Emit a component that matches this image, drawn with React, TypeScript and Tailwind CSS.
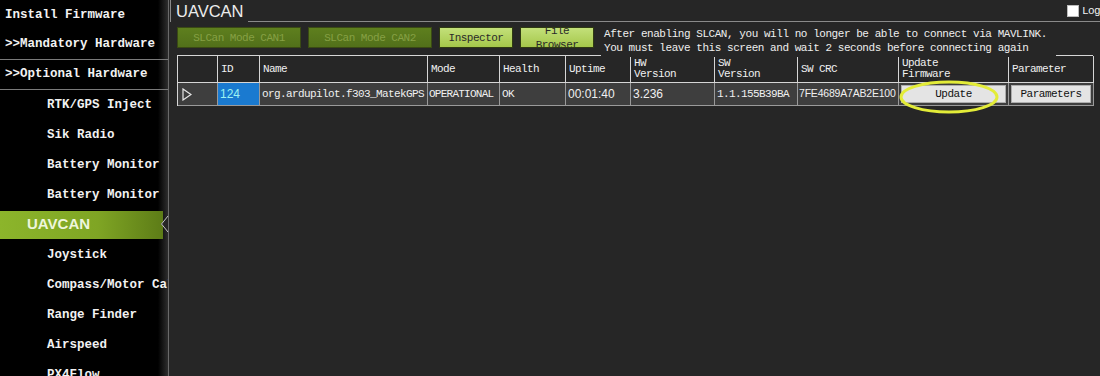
import type { ReactNode } from "react";

const mono = "font-['Liberation_Mono','DejaVu_Sans_Mono',monospace]";
const sans = "font-['Liberation_Sans',Arial,sans-serif]";

type NavItem = { label: string; indent?: boolean; divider?: boolean; active?: boolean };

const navItems: NavItem[] = [
  { label: "Install Firmware" },
  { label: ">>Mandatory Hardware", divider: true },
  { label: ">>Optional Hardware", divider: true },
  { label: "RTK/GPS Inject", indent: true },
  { label: "Sik Radio", indent: true },
  { label: "Battery Monitor", indent: true },
  { label: "Battery Monitor", indent: true },
  { label: "UAVCAN", active: true },
  { label: "Joystick", indent: true },
  { label: "Compass/Motor Calib", indent: true },
  { label: "Range Finder", indent: true },
  { label: "Airspeed", indent: true },
  { label: "PX4Flow", indent: true },
];

function SideNav(): JSX.Element {
  return (
    <nav className="h-[376px] w-[169px] shrink-0 overflow-hidden border-r border-[#6a6a6a] bg-[linear-gradient(to_right,#000_0,#000_158px,#2e2e2e_168px)]">
      {navItems.map((item, i) =>
        item.active ? (
          <div key={i} className="relative flex h-[30px] items-center pb-[1px]">
            <div className="flex h-[28px] w-[163px] items-center bg-[linear-gradient(to_right,#8cb52b,#7fa524_60%,#5d7c17)] pl-[27px]">
              <span className={`${sans} text-[15px] font-bold text-[#eef6dc]`}>{item.label}</span>
            </div>
            <svg className="absolute right-0 top-[6px]" width="7" height="16" viewBox="0 0 7 16">
              <polygon points="7,0 0,8 7,16" fill="#262626" />
              <polyline points="7,0 0.5,8 7,16" fill="none" stroke="#c8c8c8" strokeWidth="1" />
            </svg>
          </div>
        ) : (
          <div
            key={i}
            className={`flex h-[30px] items-center whitespace-nowrap ${item.indent ? "pl-[47px]" : "pl-[5px]"} ${
              item.divider ? "border-b border-[#7a7a7a]" : ""
            }`}
          >
            <span className={`${mono} text-[12.5px] font-bold text-[#f2f2f2]`}>{item.label}</span>
          </div>
        )
      )}
    </nav>
  );
}

function ModeButton({ children, bright }: { children: ReactNode; bright?: boolean }): JSX.Element {
  return (
    <div
      className={`flex h-[21px] items-center justify-center overflow-hidden border text-center leading-[14px] ${mono} text-[11px] tracking-[-0.5px] ${
        bright
          ? "border-[#2f3a12] bg-[linear-gradient(#c3e07a,#a5c74a)] text-[#2a2a2a]"
          : "border-[#3a4a14] bg-[linear-gradient(#5e7f1e,#52701a)] text-[#86a044]"
      }`}
    >
      <span>{children}</span>
    </div>
  );
}

const cols = "grid-cols-[40px_42px_168px_72px_66px_65px_84px_83px_101px_110px_85px]";

const headers: string[][] = [
  [""],
  ["ID"],
  ["Name"],
  ["Mode"],
  ["Health"],
  ["Uptime"],
  ["HW", "Version"],
  ["SW", "Version"],
  ["SW CRC"],
  ["Update", "Firmware"],
  ["Parameter"],
];

function NodeTable(): JSX.Element {
  const cell = "flex items-center overflow-hidden whitespace-nowrap border-r border-b";
  const rowText = "text-[#f0f0f0]";
  return (
    <div className="relative w-[916px]">
      <div className={`grid ${cols} border-l border-t border-[#d6d6d6]`}>
        {headers.map((h, i) => (
          <div
            key={i}
            className={`${cell} h-[27px] border-[#d6d6d6] bg-[#262626] pl-[3px] ${mono} text-[11px] leading-[11px] tracking-[-0.6px] text-[#f0f0f0]`}
          >
            <div>
              {h.map((line, j) => (
                <div key={j}>{line}</div>
              ))}
            </div>
          </div>
        ))}

        <div className={`${cell} h-[23px] border-[#9a9a9a] bg-[#3e3e3e] pl-[4px]`}>
          <svg width="10" height="13" viewBox="0 0 10 13">
            <polygon points="1,1 9,6.5 1,12" fill="none" stroke="#e8e8e8" strokeWidth="1.2" />
          </svg>
        </div>
        <div className={`${cell} h-[23px] border-[#9a9a9a] bg-[#1a7ad0] pl-[2px] ${sans} text-[12px] text-[#9df2f2]`}>124</div>
        <div className={`${cell} h-[23px] border-[#9a9a9a] bg-[#3e3e3e] pl-[2px] ${mono} text-[11px] tracking-[-0.6px] ${rowText}`}>
          org.ardupilot.f303_MatekGPS
        </div>
        <div className={`${cell} h-[23px] border-[#9a9a9a] bg-[#3e3e3e] pl-[1px] ${mono} text-[11px] tracking-[-0.75px] ${rowText}`}>
          OPERATIONAL
        </div>
        <div className={`${cell} h-[23px] border-[#9a9a9a] bg-[#3e3e3e] pl-[2px] ${mono} text-[11px] tracking-[-0.6px] ${rowText}`}>OK</div>
        <div className={`${cell} h-[23px] border-[#9a9a9a] bg-[#3e3e3e] pl-[2px] ${sans} text-[12px] ${rowText}`}>00:01:40</div>
        <div className={`${cell} h-[23px] border-[#9a9a9a] bg-[#3e3e3e] pl-[2px] ${sans} text-[12px] ${rowText}`}>3.236</div>
        <div className={`${cell} h-[23px] border-[#9a9a9a] bg-[#3e3e3e] pl-[2px] ${mono} text-[11px] tracking-[-0.6px] ${rowText}`}>
          1.1.155B39BA
        </div>
        <div className={`${cell} h-[23px] border-[#9a9a9a] bg-[#3e3e3e] pl-[1px] ${sans} text-[10.5px] tracking-[-0.2px] ${rowText}`}>
          7FE4689A7AB2E100
        </div>
        <div className={`${cell} h-[23px] border-[#9a9a9a] bg-[#3e3e3e] p-[2px]`}>
          <div className={`flex h-full w-full items-center justify-center border border-[#adadad] bg-[#e4e4e4] ${mono} text-[11px] tracking-[-0.5px] text-[#111]`}>
            Update
          </div>
        </div>
        <div className={`${cell} h-[23px] border-[#9a9a9a] bg-[#3e3e3e] p-[2px]`}>
          <div className={`flex h-full w-full items-center justify-center border border-[#adadad] bg-[#e4e4e4] ${mono} text-[11px] tracking-[-0.5px] text-[#111]`}>
            Parameters
          </div>
        </div>
      </div>

      <svg className="pointer-events-none absolute left-[721px] top-[25px]" width="104" height="36" viewBox="0 0 104 36">
        <ellipse cx="51" cy="17" rx="48" ry="15" fill="none" stroke="#e3ec38" strokeWidth="3" />
      </svg>
    </div>
  );
}

export default function App(): JSX.Element {
  return (
    <div className="flex h-[376px] w-[1100px] overflow-hidden bg-[#262626]">
      <SideNav />
      <main className="flex min-w-0 flex-1 flex-col pl-[1px]">
        <div className="flex h-[22px] items-start">
          <div className="flex h-[22px] items-center border-l border-[#8a8a8a] pl-[5px] pr-[4px]">
            <span className={`${sans} text-[16.5px] leading-none text-[#ececec]`}>UAVCAN</span>
          </div>
          <div className="flex h-[22px] flex-1 items-start justify-end border-b border-[#8a8a8a] pt-[5px]">
            <div className="flex items-center gap-[3px]">
              <div className="h-[12px] w-[12px] border border-[#bbb] bg-white" />
              <span className={`${mono} text-[11px] leading-[12px] tracking-[-0.6px] text-[#f0f0f0]`}>Log</span>
            </div>
          </div>
        </div>

        <div className="flex flex-col pl-[7px] pt-[5px]">
          <div className="flex h-[21px] items-start overflow-visible">
            <div className="grid grid-cols-[124px_124px_74px_74px] gap-[7px]">
              <ModeButton>SLCan Mode CAN1</ModeButton>
              <ModeButton>SLCan Mode CAN2</ModeButton>
              <ModeButton bright>Inspector</ModeButton>
              <ModeButton bright>
                File
                <br />
                Browser
              </ModeButton>
            </div>
            <p
              className={`relative z-10 ml-[7px] h-[30px] whitespace-nowrap bg-[#262626] pl-[3px] pr-[9px] ${mono} text-[11px] leading-[14px] tracking-[-0.45px] text-[#eeeeee]`}
            >
              After enabling SLCAN, you will no longer be able to connect via MAVLINK.
              <br />
              You must leave this screen and wait 2 seconds before connecting again
            </p>
          </div>

          <div className="mt-[7px]">
            <NodeTable />
          </div>
        </div>
      </main>
    </div>
  );
}
